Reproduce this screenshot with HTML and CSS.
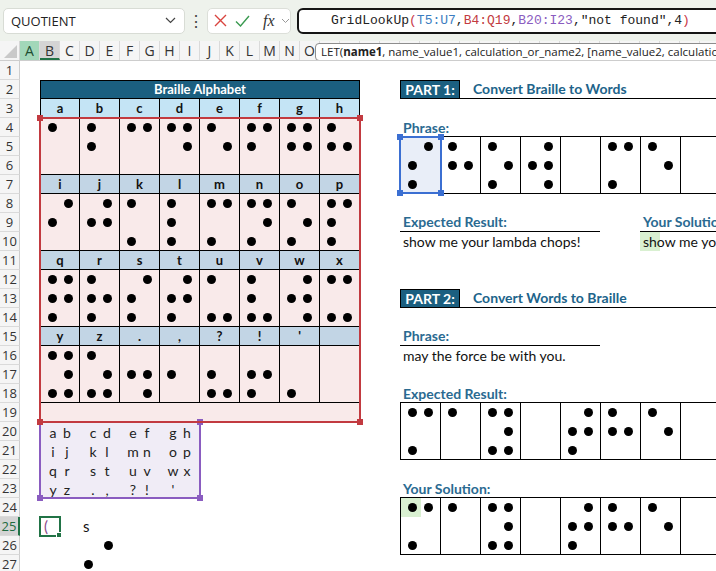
FILE: index.html
```html
<!DOCTYPE html>
<html lang="en">
<head>
    <meta charset="UTF-8">
    <title>Braille Alphabet</title>
    <link rel="stylesheet" href="styles.css">
</head>
<body>
    <!-- formula bar -->
    <div class="toolbar">
        <div class="namebox">
            <span>QUOTIENT</span>
            <svg width="11" height="7" viewBox="0 0 11 7"><path d="M1 1l4.5 4.5L10 1" fill="none" stroke="#444" stroke-width="1.2"/></svg>
        </div>
        <div class="grip">&#8942;</div>
        <div class="fnbox">
            <svg class="ico-x" width="13" height="13" viewBox="0 0 13 13"><path d="M1 1l11 11M12 1L1 12" stroke="#d9443f" stroke-width="1.4"/></svg>
            <svg class="ico-ok" width="15" height="12" viewBox="0 0 15 12"><path d="M1 6.5l4.5 4.5L14 1" fill="none" stroke="#3a9a50" stroke-width="1.4"/></svg>
            <span class="fx">fx</span>
            <svg width="9" height="6" viewBox="0 0 9 6"><path d="M1 1l3.5 3.5L8 1" fill="none" stroke="#999" stroke-width="1"/></svg>
        </div>
        <div class="formula">GridLookUp<span class="paren">(</span><span class="ref-blue">T5:U7</span>,<span class="ref-red">B4:Q19</span>,<span class="ref-purple">B20:I23</span>,"not found",4<span class="paren">)</span></div>
    </div>

    <!-- column letters; the ones under the tooltip stay empty -->
    <div class="colheads">
        <div class="corner"><span class="tri"></span></div>
        <div class="ch ch-a">A</div><div class="ch ch-b">B</div><div class="ch">C</div><div class="ch">D</div>
        <div class="ch">E</div><div class="ch">F</div><div class="ch">G</div><div class="ch">H</div>
        <div class="ch">I</div><div class="ch">J</div><div class="ch">K</div><div class="ch">L</div>
        <div class="ch">M</div><div class="ch">N</div><div class="ch">O</div><div class="ch"></div>
        <div class="ch"></div><div class="ch"></div><div class="ch"></div><div class="ch"></div>
        <div class="ch"></div><div class="ch"></div><div class="ch"></div><div class="ch"></div>
        <div class="ch"></div><div class="ch"></div><div class="ch"></div><div class="ch"></div>
        <div class="ch"></div><div class="ch"></div><div class="ch"></div><div class="ch"></div>
        <div class="ch"></div><div class="ch"></div><div class="ch"></div><div class="ch"></div>
        <div class="tip">LET(<b>name1</b>, name_value1, calculation_or_name2, [name_value2, calculation_or_name3], ...)</div>
    </div>

    <div class="sheet">
        <div class="rh">1</div><div class="rh">2</div><div class="rh">3</div><div class="rh">4</div>
        <div class="rh">5</div><div class="rh">6</div><div class="rh">7</div><div class="rh">8</div>
        <div class="rh">9</div><div class="rh">10</div><div class="rh">11</div><div class="rh">12</div>
        <div class="rh">13</div><div class="rh">14</div><div class="rh">15</div><div class="rh">16</div>
        <div class="rh">17</div><div class="rh">18</div><div class="rh">19</div><div class="rh">20</div>
        <div class="rh">21</div><div class="rh">22</div><div class="rh">23</div><div class="rh">24</div>
        <div class="rh rh-active">25</div><div class="rh">26</div><div class="rh">27</div>

        <!-- braille lookup table -->
        <div class="braille">
            <div class="b-title">Braille Alphabet</div>

            <div class="b-head top">a</div><div class="b-head top">b</div><div class="b-head top">c</div><div class="b-head top">d</div>
            <div class="b-head top">e</div><div class="b-head top">f</div><div class="b-head top">g</div><div class="b-head top">h</div>
            <div class="cell"><i class="dot d1"></i></div>
            <div class="cell"><i class="dot d1"></i><i class="dot d2"></i></div>
            <div class="cell"><i class="dot d1"></i><i class="dot d4"></i></div>
            <div class="cell"><i class="dot d1"></i><i class="dot d4"></i><i class="dot d5"></i></div>
            <div class="cell"><i class="dot d1"></i><i class="dot d5"></i></div>
            <div class="cell"><i class="dot d1"></i><i class="dot d2"></i><i class="dot d4"></i></div>
            <div class="cell"><i class="dot d1"></i><i class="dot d2"></i><i class="dot d4"></i><i class="dot d5"></i></div>
            <div class="cell"><i class="dot d1"></i><i class="dot d2"></i><i class="dot d5"></i></div>

            <div class="b-head">i</div><div class="b-head">j</div><div class="b-head">k</div><div class="b-head">l</div>
            <div class="b-head">m</div><div class="b-head">n</div><div class="b-head">o</div><div class="b-head">p</div>
            <div class="cell"><i class="dot d2"></i><i class="dot d4"></i></div>
            <div class="cell"><i class="dot d2"></i><i class="dot d4"></i><i class="dot d5"></i></div>
            <div class="cell"><i class="dot d1"></i><i class="dot d3"></i></div>
            <div class="cell"><i class="dot d1"></i><i class="dot d2"></i><i class="dot d3"></i></div>
            <div class="cell"><i class="dot d1"></i><i class="dot d3"></i><i class="dot d4"></i></div>
            <div class="cell"><i class="dot d1"></i><i class="dot d3"></i><i class="dot d4"></i><i class="dot d5"></i></div>
            <div class="cell"><i class="dot d1"></i><i class="dot d3"></i><i class="dot d5"></i></div>
            <div class="cell"><i class="dot d1"></i><i class="dot d2"></i><i class="dot d3"></i><i class="dot d4"></i></div>

            <div class="b-head">q</div><div class="b-head">r</div><div class="b-head">s</div><div class="b-head">t</div>
            <div class="b-head">u</div><div class="b-head">v</div><div class="b-head">w</div><div class="b-head">x</div>
            <div class="cell"><i class="dot d1"></i><i class="dot d2"></i><i class="dot d3"></i><i class="dot d4"></i><i class="dot d5"></i></div>
            <div class="cell"><i class="dot d1"></i><i class="dot d2"></i><i class="dot d3"></i><i class="dot d5"></i></div>
            <div class="cell"><i class="dot d2"></i><i class="dot d3"></i><i class="dot d4"></i></div>
            <div class="cell"><i class="dot d2"></i><i class="dot d3"></i><i class="dot d4"></i><i class="dot d5"></i></div>
            <div class="cell"><i class="dot d1"></i><i class="dot d3"></i><i class="dot d6"></i></div>
            <div class="cell"><i class="dot d1"></i><i class="dot d2"></i><i class="dot d3"></i><i class="dot d6"></i></div>
            <div class="cell"><i class="dot d2"></i><i class="dot d4"></i><i class="dot d5"></i><i class="dot d6"></i></div>
            <div class="cell"><i class="dot d1"></i><i class="dot d3"></i><i class="dot d4"></i><i class="dot d6"></i></div>

            <div class="b-head">y</div><div class="b-head">z</div><div class="b-head">.</div><div class="b-head">,</div>
            <div class="b-head">?</div><div class="b-head">!</div><div class="b-head">'</div><div class="b-head"></div>
            <div class="cell"><i class="dot d1"></i><i class="dot d3"></i><i class="dot d4"></i><i class="dot d5"></i><i class="dot d6"></i></div>
            <div class="cell"><i class="dot d1"></i><i class="dot d3"></i><i class="dot d5"></i><i class="dot d6"></i></div>
            <div class="cell"><i class="dot d2"></i><i class="dot d5"></i><i class="dot d6"></i></div>
            <div class="cell"><i class="dot d2"></i></div>
            <div class="cell"><i class="dot d2"></i><i class="dot d3"></i><i class="dot d6"></i></div>
            <div class="cell"><i class="dot d2"></i><i class="dot d3"></i><i class="dot d5"></i></div>
            <div class="cell"><i class="dot d3"></i></div>
            <div class="cell"></div>

            <div class="b-foot"></div>
        </div>
        <div class="range-red"><span class="hd tl"></span><span class="hd tr"></span><span class="hd bl"></span><span class="hd br"></span></div>

        <!-- letter order -->
        <div class="range-purple">
            <span class="lt l">a</span><span class="lt r">b</span><span class="lt l">c</span><span class="lt r">d</span>
            <span class="lt l">e</span><span class="lt r">f</span><span class="lt l">g</span><span class="lt r">h</span>
            <span class="lt l">i</span><span class="lt r">j</span><span class="lt l">k</span><span class="lt r">l</span>
            <span class="lt l">m</span><span class="lt r">n</span><span class="lt l">o</span><span class="lt r">p</span>
            <span class="lt l">q</span><span class="lt r">r</span><span class="lt l">s</span><span class="lt r">t</span>
            <span class="lt l">u</span><span class="lt r">v</span><span class="lt l">w</span><span class="lt r">x</span>
            <span class="lt l">y</span><span class="lt r">z</span><span class="lt l">.</span><span class="lt r">,</span>
            <span class="lt l">?</span><span class="lt r">!</span><span class="lt l">'</span><span class="lt r"></span>
            <span class="hd tl"></span><span class="hd tr"></span><span class="hd bl"></span><span class="hd br"></span>
        </div>

        <!-- active cell and spill -->
        <div class="active">(<span class="fill"></span></div>
        <div class="spill-s">s</div>
        <div class="spill-d1"><i class="dot"></i></div>
        <div class="spill-d2"><i class="dot"></i></div>

        <!-- part 1 -->
        <div class="part p1">
            <div class="part-tag">PART 1:</div>
            <div class="part-title">Convert Braille to Words</div>
        </div>
        <div class="label p1-phrase">Phrase:</div>
        <div class="strip p1-strip">
            <div class="cell sel"><i class="dot d2"></i><i class="dot d3"></i><i class="dot d4"></i>
                <span class="sel-box"><span class="hd tl"></span><span class="hd tr"></span><span class="hd bl"></span><span class="hd br"></span></span>
            </div>
            <div class="cell"><i class="dot d1"></i><i class="dot d2"></i><i class="dot d5"></i></div>
            <div class="cell"><i class="dot d1"></i><i class="dot d3"></i><i class="dot d5"></i></div>
            <div class="cell"><i class="dot d2"></i><i class="dot d4"></i><i class="dot d5"></i><i class="dot d6"></i></div>
            <div class="cell"></div>
            <div class="cell"><i class="dot d1"></i><i class="dot d3"></i><i class="dot d4"></i></div>
            <div class="cell"><i class="dot d1"></i><i class="dot d5"></i></div>
            <div class="cell"></div>
        </div>
        <div class="label ul p1-exp">Expected Result:</div>
        <div class="txt p1-exp-text">show me your lambda chops!</div>
        <div class="label ul p1-sol">Your Solution:</div>
        <div class="txt p1-sol-text">show me your lambda chops!</div>

        <!-- part 2 -->
        <div class="part p2">
            <div class="part-tag">PART 2:</div>
            <div class="part-title">Convert Words to Braille</div>
        </div>
        <div class="label ul p2-phrase">Phrase:</div>
        <div class="txt p2-phrase-text">may the force be with you.</div>
        <div class="label p2-exp">Expected Result:</div>
        <div class="strip p2-exp-strip">
            <div class="cell"><i class="dot d1"></i><i class="dot d3"></i><i class="dot d4"></i></div>
            <div class="cell"><i class="dot d1"></i></div>
            <div class="cell"><i class="dot d1"></i><i class="dot d3"></i><i class="dot d4"></i><i class="dot d5"></i><i class="dot d6"></i></div>
            <div class="cell"></div>
            <div class="cell"><i class="dot d2"></i><i class="dot d3"></i><i class="dot d4"></i><i class="dot d5"></i></div>
            <div class="cell"><i class="dot d1"></i><i class="dot d2"></i><i class="dot d5"></i></div>
            <div class="cell"><i class="dot d1"></i><i class="dot d5"></i></div>
            <div class="cell"></div>
        </div>
        <div class="label p2-sol">Your Solution:</div>
        <div class="strip p2-sol-strip">
            <div class="cell hl"><i class="dot d1"></i><i class="dot d3"></i><i class="dot d4"></i></div>
            <div class="cell"><i class="dot d1"></i></div>
            <div class="cell"><i class="dot d1"></i><i class="dot d3"></i><i class="dot d4"></i><i class="dot d5"></i><i class="dot d6"></i></div>
            <div class="cell"></div>
            <div class="cell"><i class="dot d2"></i><i class="dot d3"></i><i class="dot d4"></i><i class="dot d5"></i></div>
            <div class="cell"><i class="dot d1"></i><i class="dot d2"></i><i class="dot d5"></i></div>
            <div class="cell"><i class="dot d1"></i><i class="dot d5"></i></div>
            <div class="cell"></div>
        </div>
    </div>
</body>
</html>
```
FILE: styles.css
```css
* {
    box-sizing: border-box;
}

body {
    margin: 0;
    width: 716px;
    height: 571px;
    overflow: hidden;
    background: #fff;
    font-family: "Lato", "Open Sans", sans-serif;
    color: #111;
}

/* ---------- formula bar ---------- */
.toolbar {
    height: 41px;
    background: #eef2ec;
    display: flex;
    align-items: center;
    padding-left: 3px;
    white-space: nowrap;
    overflow: hidden;
}

.namebox {
    width: 182px;
    height: 26px;
    flex: none;
    background: #fff;
    border: 1px solid #d8dcd5;
    border-radius: 5px;
    display: flex;
    align-items: center;
    justify-content: space-between;
    padding: 0 8px 0 7px;
    font: 13px "Open Sans", sans-serif;
    color: #222;
}

.grip {
    width: 22px;
    flex: none;
    text-align: center;
    font-size: 16px;
    color: #444;
}

.fnbox {
    width: 84px;
    height: 26px;
    flex: none;
    background: #fff;
    border: 1px solid #dcdfd9;
    border-radius: 5px;
    display: flex;
    align-items: center;
    padding-left: 6px;
}

.ico-ok {
    margin-left: 8px;
}

.fx {
    margin-left: 13px;
    margin-right: 6px;
    font: italic 16px "Liberation Serif", serif;
    color: #333;
}

.formula {
    margin-left: 6px;
    width: 430px;
    flex: none;
    height: 26px;
    border: 2px solid #151515;
    border-radius: 6px;
    background: #fff;
    padding-left: 32px;
    font: 13px/22px "Liberation Mono", monospace;
    color: #222;
}

.paren { color: #c9394a; }
.ref-blue { color: #3a7cc0; }
.ref-red { color: #c23a40; }
.ref-purple { color: #8a5cc0; }

/* ---------- column headers ---------- */
.colheads {
    position: relative;
    display: flex;
    height: 20px;
    background: #f5f5f5;
    border-bottom: 1px solid #cdcdcd;
    overflow: hidden;
}

.corner {
    width: 20px;
    flex: none;
    display: flex;
    align-items: flex-end;
    justify-content: flex-end;
    padding: 0 2px 2px 0;
    border-right: 1px solid #d6d6d6;
}

.tri {
    width: 0;
    height: 0;
    border-left: 13px solid transparent;
    border-bottom: 13px solid #c9c9c9;
}

.ch {
    width: 20px;
    flex: none;
    border-right: 1px solid #dadada;
    text-align: center;
    font: 14px/19px "Open Sans", sans-serif;
    color: #333;
}

.ch-a {
    background: #a2d7b9;
    color: #1d4d31;
}

.ch-b {
    background: #d4d4d4;
    border-bottom: 2px solid #217346;
}

.tip {
    position: absolute;
    left: 315px;
    top: 2px;
    height: 18px;
    background: #fff;
    border: 1px solid #8d8d8d;
    border-radius: 4px;
    padding: 0 5px;
    font: 11.5px/16px "Open Sans", sans-serif;
    color: #222;
    white-space: nowrap;
}

/* ---------- sheet ---------- */
.sheet {
    display: grid;
    grid-template-columns: 20px repeat(35, 20px);
    grid-template-rows: repeat(27, 19px);
    overflow: hidden;
}

.rh {
    grid-column: 1;
    background: #f5f5f5;
    border-bottom: 1px solid #dadada;
    border-right: 1px solid #cdcdcd;
    text-align: center;
    font: 13px/18px "Open Sans", sans-serif;
    color: #333;
}

.rh-active {
    background: #d4d4d4;
    color: #1e6b40;
    border-right: 2px solid #217346;
}

.dot {
    display: block;
    width: 9px;
    height: 9px;
    border-radius: 50%;
    background: #000;
}

.d1 { grid-area: 1 / 1; }
.d2 { grid-area: 2 / 1; }
.d3 { grid-area: 3 / 1; }
.d4 { grid-area: 1 / 2; }
.d5 { grid-area: 2 / 2; }
.d6 { grid-area: 3 / 2; }

/* one braille character, 2 x 3 dots */
.cell {
    border-right: 1px solid #000;
    display: grid;
    grid-template-columns: 16px 16px;
    grid-template-rows: 19px 19px 18px;
    justify-content: center;
    place-items: center;
}

/* ---------- braille table ---------- */
.braille {
    grid-column: 3 / 19;
    grid-row: 2 / 20;
    display: grid;
    grid-template-columns: 39px repeat(7, 40px);
    grid-template-rows: 19px 19px 57px 19px 57px 19px 57px 19px 57px 19px;
    background: #f9eaea;
    border-left: 1px solid #000;
}

.b-title {
    grid-column: 1 / -1;
    background: #1b5f80;
    color: #fff;
    font-weight: 700;
    font-size: 13px;
    line-height: 17px;
    text-align: center;
    border: 1px solid #000;
    border-left: none;
}

.b-head {
    background: #c2d5e5;
    border-right: 1px solid #000;
    border-bottom: 1px solid #000;
    font-weight: 700;
    font-size: 13px;
    line-height: 18px;
    text-align: center;
}

.b-head.top {
    background: #c4e4f5;
}

.braille .cell {
    border-bottom: 1px solid #000;
}

.b-foot {
    grid-column: 1 / -1;
}

.hd {
    position: absolute;
    width: 6px;
    height: 6px;
}

.tl { top: -4px; left: -4px; }
.tr { top: -4px; right: -4px; }
.bl { bottom: -4px; left: -4px; }
.br { bottom: -4px; right: -4px; }

.range-red {
    grid-column: 3 / 19;
    grid-row: 4 / 20;
    margin: -1px;
    border: 2px solid #c23a40;
    position: relative;
    z-index: 2;
}

.range-red .hd { background: #c23a40; }

.range-purple {
    grid-column: 3 / 11;
    grid-row: 20 / 24;
    margin: -1px;
    border: 2px solid #8a5cc0;
    background: #f0ecf6;
    position: relative;
    display: grid;
    grid-template-columns: repeat(8, 20px);
    grid-template-rows: repeat(4, 19px);
}

.range-purple .hd { background: #8a5cc0; }

.lt {
    font-size: 14px;
    line-height: 19px;
    text-align: center;
    color: #222;
}

.lt.l { padding-left: 4px; }
.lt.r { padding-right: 8px; }

.active {
    grid-column: 3;
    grid-row: 25;
    margin: -1px;
    border: 2px solid #217346;
    position: relative;
    padding-left: 3px;
    font-size: 15px;
    line-height: 16px;
    color: #8b4a8a;
}

.fill {
    position: absolute;
    right: -3px;
    bottom: -3px;
    width: 6px;
    height: 6px;
    background: #217346;
    border: 1px solid #fff;
}

.spill-s {
    grid-column: 5;
    grid-row: 25;
    padding-left: 3px;
    font-size: 15px;
    line-height: 18px;
}

.spill-d1,
.spill-d2 {
    display: flex;
    align-items: center;
    padding-left: 4px;
}

.spill-d1 { grid-column: 6; grid-row: 26; }
.spill-d2 { grid-column: 5; grid-row: 27; }

/* ---------- parts ---------- */
.part {
    grid-column: 21 / -1;
    display: flex;
    border-bottom: 1px solid #000;
}

.p1 { grid-row: 2; }
.p2 { grid-row: 13; }

.part-tag {
    width: 60px;
    flex: none;
    background: #1b5f80;
    border: 1px solid #000;
    border-bottom: none;
    color: #fff;
    font-weight: 700;
    font-size: 14px;
    line-height: 18px;
    text-align: center;
}

.part-title {
    padding-left: 13px;
    color: #20638a;
    font-weight: 700;
    font-size: 14px;
    line-height: 18px;
    white-space: nowrap;
}

.label {
    padding-left: 3px;
    color: #2a6a91;
    font-weight: 700;
    font-size: 14px;
    line-height: 19px;
    white-space: nowrap;
}

.label.ul {
    border-bottom: 1px solid #000;
    line-height: 18px;
}

.txt {
    padding-left: 3px;
    font-size: 14px;
    line-height: 19px;
    white-space: nowrap;
    color: #111;
}

.p1-phrase { grid-column: 21 / 31; grid-row: 4; }
.p1-exp { grid-column: 21 / 31; grid-row: 9; }
.p1-exp-text { grid-column: 21 / 31; grid-row: 10; }
.p1-sol { grid-column: 33 / -1; grid-row: 9; overflow: hidden; }
.p1-sol-text {
    grid-column: 33 / -1;
    grid-row: 10;
    overflow: hidden;
    background: linear-gradient(#d9f0d1, #d9f0d1) 0 0 / 20px 100% no-repeat;
}
.p2-phrase { grid-column: 21 / 31; grid-row: 15; }
.p2-phrase-text { grid-column: 21 / 31; grid-row: 16; }
.p2-exp { grid-column: 21 / 31; grid-row: 18; }
.p2-sol { grid-column: 21 / 31; grid-row: 23; }

/* braille strips on the right */
.strip {
    grid-column: 21 / -1;
    display: flex;
    margin-top: -1px;
    border-top: 1px solid #000;
    border-bottom: 1px solid #000;
    border-left: 1px solid #000;
    overflow: hidden;
}

.strip .cell {
    width: 40px;
    flex: none;
}

.p1-strip { grid-row: 5 / 8; overflow: visible; }
.p2-exp-strip { grid-row: 19 / 22; }
.p2-sol-strip { grid-row: 24 / 27; }

.cell.sel {
    position: relative;
    background: #e9eef8;
}

.sel-box {
    position: absolute;
    top: -1px;
    left: -2px;
    right: -2px;
    bottom: -1px;
    border: 2px solid #3b6fd2;
}

.sel-box .hd { background: #3b6fd2; }

.cell.hl {
    background: linear-gradient(#d9f0d1, #d9f0d1) 0 0 / 20px 19px no-repeat;
}
```
